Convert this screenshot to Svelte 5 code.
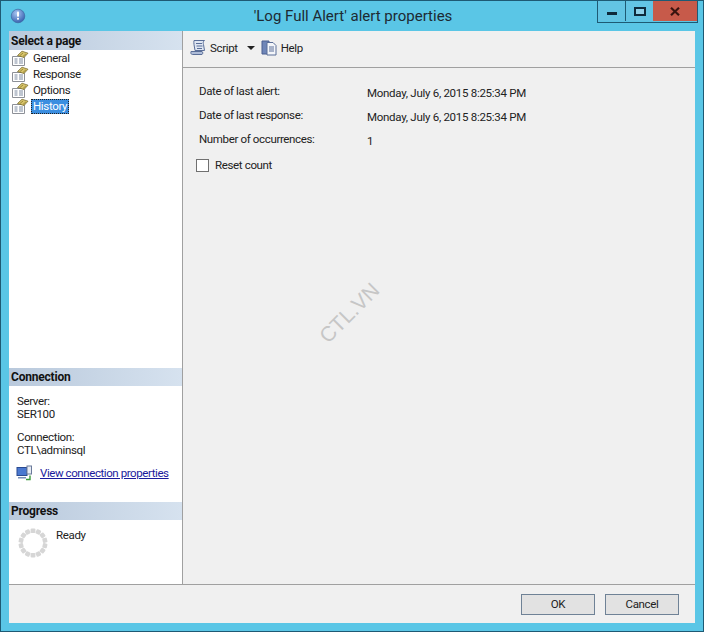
<script>
// Alert properties dialog (SSMS style)
const pages = ["General", "Response", "Options", "History"];
const selected = "History";
const rows = [
  { label: "Date of last alert:", value: "Monday, July 6, 2015 8:25:34 PM" },
  { label: "Date of last response:", value: "Monday, July 6, 2015 8:25:34 PM" },
  { label: "Number of occurrences:", value: "1" },
];
const spokes = Array.from({ length: 14 }, (_, i) => (i * 360) / 14);
</script>

<div class="window">
  <header class="titlebar">
    <svg class="app-icon" width="18" height="18" viewBox="0 0 18 18">
      <defs>
        <radialGradient id="orb" cx="0.4" cy="0.3" r="0.8">
          <stop offset="0" stop-color="#a8c6f2" />
          <stop offset="1" stop-color="#2a55a8" />
        </radialGradient>
      </defs>
      <circle cx="9" cy="9" r="6.8" fill="url(#orb)" stroke="#3a6098" stroke-width="0.6" />
      <rect x="8" y="4.4" width="2" height="5.4" rx="0.8" fill="#fff" />
      <rect x="8" y="10.8" width="2" height="2" rx="0.8" fill="#fff" />
    </svg>
    <div class="title">'Log Full Alert' alert properties</div>
    <div class="controls">
      <button class="ctl min" aria-label="Minimize"><span></span></button>
      <button class="ctl max" aria-label="Maximize"><span></span></button>
      <button class="ctl close" aria-label="Close">
        <svg width="10" height="9" viewBox="0 0 10 9"><path d="M1 .8 9 8.2M9 .8 1 8.2" stroke="#3a1410" stroke-width="2.2" fill="none" /></svg>
      </button>
    </div>
  </header>

  <div class="client">
    <div class="main">
      <aside class="sidebar">
        <div class="section-head first">Select a page</div>
        <ul class="pages">
          {#each pages as page}
            <li>
              <svg class="page-icon" width="17" height="16" viewBox="0 0 17 16">
                <path d="M.5 6.5h12v9H.5z" fill="#fff" stroke="#8d9097" />
                <path d="M2.5 9h3M7 9h4M2.5 11h3M7 11h4M2.5 13h3M7 13h4" stroke="#7d8aa0" />
                <path d="M5.5 5.5 10 1.2l6 2-4 4.3z" fill="#d8c46a" stroke="#6e6020" stroke-width="0.7" />
                <path d="M8 5.5 11 3M11 6.5 14 3.8" stroke="#8a7a30" stroke-width="0.8" />
              </svg>
              <span class="page-name" class:selected={page === selected}>{page}</span>
            </li>
          {/each}
        </ul>

        <div class="section-head">Connection</div>
        <div class="connection">
          <div>Server:</div>
          <div>SER100</div>
          <div class="conn-label">Connection:</div>
          <div>CTL\adminsql</div>
          <div class="conn-link">
            <svg width="17" height="16" viewBox="0 0 17 16">
              <rect x="1" y="2.5" width="10" height="8" fill="#4a78d0" stroke="#2a4a90" />
              <path d="M2 12h8v1.5H2z" fill="#7a90b8" />
              <rect x="11" y="1" width="4.5" height="8" fill="#e8ecf4" stroke="#6a7a9a" />
              <path d="M10 14.5h4V10.5" stroke="#3c9a3c" stroke-width="1.4" fill="none" />
            </svg>
            <span class="link">View connection properties</span>
          </div>
        </div>

        <div class="section-head">Progress</div>
        <div class="progress">
          <svg width="30" height="30" viewBox="0 0 30 30">
            {#each spokes as angle}
              <rect x="12.6" y="0.5" width="4.8" height="4.6" rx="1" fill="#d6d6d6" transform="rotate({angle} 15 15)" />
            {/each}
          </svg>
          <span class="ready">Ready</span>
        </div>
      </aside>

      <section class="content">
        <div class="toolbar">
          <svg class="tool-icon" width="17" height="17" viewBox="0 0 17 17">
            <path d="M4 1.5h10.5c-1.5 1-1.5 2.5-1 4l1 6H5l-1-6c-.4-1.5 0-3 0-4z" fill="#dfe6f2" stroke="#5a6e98" />
            <path d="M1 12.5h11c.8 0 1.2 2.5 0 3H2.5c-1.5 0-2-1.5-1.5-3z" fill="#aebcd8" stroke="#5a6e98" />
            <path d="M6 4.5h6M6.5 7h6M7 9.5h5" stroke="#5a6e98" />
          </svg>
          <span class="tool-text script">Script</span>
          <span class="caret"></span>
          <svg class="tool-icon" width="17" height="17" viewBox="0 0 17 17">
            <path d="M1 2h7v13H1z" fill="#6f86b8" stroke="#4a5f90" />
            <path d="M6 3.5h6l3 3v9.5H6z" fill="#f4f6fa" stroke="#5a6e98" />
            <path d="M8 8h5M8 10h5M8 12h5" stroke="#5a6e98" />
          </svg>
          <span class="tool-text">Help</span>
        </div>

        <div class="details">
          {#each rows as row}
            <div class="row">
              <div class="label">{row.label}</div>
              <div class="value">{row.value}</div>
            </div>
          {/each}
          <label class="reset">
            <span class="box"></span>
            <span>Reset count</span>
          </label>
        </div>

        <div class="watermark">CTL.VN</div>
      </section>
    </div>

    <footer class="footer">
      <button class="btn">OK</button>
      <button class="btn">Cancel</button>
    </footer>
  </div>
</div>

<style>
:global(body) {
  margin: 0;
  background: #5ac3e4;
}

.window {
  width: 704px;
  height: 632px;
  box-sizing: border-box;
  border: 1px solid #1e5a74;
  background: #5ac6e6;
  padding: 0 8px 8px 8px;
  display: flex;
  flex-direction: column;
  font-family: Roboto, "Liberation Sans", sans-serif;
  font-size: 11.5px;
  letter-spacing: -0.35px;
  color: #222;
}

.titlebar {
  height: 30px;
  flex: none;
  display: flex;
  align-items: flex-start;
}

.app-icon {
  margin: 6px 0 0 0;
  flex: none;
}

.title {
  flex: 1;
  text-align: center;
  font-size: 15px;
  letter-spacing: 0;
  line-height: 31px;
  color: #1d2a33;
  padding-left: 82px;
}

.controls {
  display: flex;
  height: 21px;
  margin-right: -3px;
  border: 1px solid #1e5a74;
  border-top: none;
  flex: none;
}

.ctl {
  border: none;
  padding: 0;
  height: 20px;
  display: flex;
  align-items: center;
  justify-content: center;
  background: #63c4e4;
  box-sizing: border-box;
}

.min {
  width: 28px;
  border-right: 1px solid #1e5a74;
}

.min span {
  width: 10px;
  height: 3px;
  margin-top: 5px;
  background: #0e2a3c;
}

.max {
  width: 27px;
}

.max span {
  width: 8px;
  height: 5px;
  border: 2px solid #0e2a3c;
  background: #8fd0e8;
}

.close {
  width: 44px;
  background: #c75a4a;
}

.client {
  flex: 1;
  display: flex;
  flex-direction: column;
  background: #f0f0f0;
  min-height: 0;
}

.main {
  flex: 1;
  display: flex;
  min-height: 0;
  border-bottom: 1px solid #a0a0a0;
}

.sidebar {
  width: 173px;
  flex: none;
  background: #fff;
  border-right: 1px solid #a0a0a0;
  display: flex;
  flex-direction: column;
}

.section-head {
  height: 18px;
  flex: none;
  line-height: 18px;
  padding-left: 2px;
  font-size: 12px;
  letter-spacing: -0.2px;
  font-weight: 700;
  color: #111;
  background: linear-gradient(to right, #b9c9dc, #d6e2ef);
}

.section-head.first {
  height: 19px;
  line-height: 20px;
}

.pages {
  list-style: none;
  margin: 0;
  padding: 0;
  height: 318px;
  flex: none;
}

.pages li {
  height: 16px;
  display: flex;
  align-items: center;
  padding-left: 3px;
}

.page-icon {
  flex: none;
}

.page-name {
  margin-left: 2px;
  padding: 0 2px;
  line-height: 15px;
}

.page-name.selected {
  background: #3b8ee0;
  color: #fff;
  outline: 1px dotted #222;
  outline-offset: -1px;
}

.connection {
  height: 116px;
  flex: none;
  box-sizing: border-box;
  padding: 9px 0 0 8px;
  line-height: 13px;
}

.conn-label {
  margin-top: 10px;
}

.conn-link {
  display: flex;
  align-items: center;
  gap: 7px;
  margin-top: 8px;
  margin-left: -1px;
  white-space: nowrap;
}

.link {
  color: #1a1a9c;
  letter-spacing: -0.42px;
  text-decoration: underline;
}

.progress {
  flex: 1;
  display: flex;
  align-items: flex-start;
  padding: 8px 0 0 9px;
}

.ready {
  margin-left: 8px;
  padding-top: 1px;
  line-height: 13px;
}

.content {
  flex: 1;
  position: relative;
  min-width: 0;
}

.toolbar {
  height: 37px;
  box-sizing: border-box;
  border-bottom: 1px solid #a0a0a0;
  display: flex;
  align-items: center;
  padding: 0 0 3px 7px;
}

.tool-text {
  margin-left: 3px;
}

.script {
  margin-right: 9px;
}

.caret {
  width: 0;
  height: 0;
  border-left: 4px solid transparent;
  border-right: 4px solid transparent;
  border-top: 4px solid #222;
  margin-right: 6px;
}

.details {
  padding: 17px 0 0 16px;
}

.row {
  display: flex;
  height: 24px;
}

.label {
  width: 168px;
  line-height: 13px;
}

.value {
  line-height: 13px;
  padding-top: 2px;
  letter-spacing: -0.28px;
}

.reset {
  display: flex;
  align-items: center;
  margin: 0 0 0 -3px;
  height: 16px;
}

.box {
  width: 11px;
  height: 11px;
  border: 1px solid #707070;
  background: #fff;
  margin-right: 6px;
}

.watermark {
  position: absolute;
  left: 129px;
  top: 270px;
  font-size: 21px;
  font-family: "Liberation Sans", sans-serif;
  font-weight: 400;
  letter-spacing: 0;
  color: #c6c6c6;
  transform: rotate(-45deg);
}

.footer {
  height: 38px;
  flex: none;
  display: flex;
  justify-content: flex-end;
  align-items: center;
  gap: 10px;
  padding-right: 16px;
}

.btn {
  width: 74px;
  height: 21px;
  padding: 0;
  background: #e2e2e2;
  border: 1px solid #6f8296;
  font: inherit;
  letter-spacing: inherit;
  color: #222;
}
</style>
